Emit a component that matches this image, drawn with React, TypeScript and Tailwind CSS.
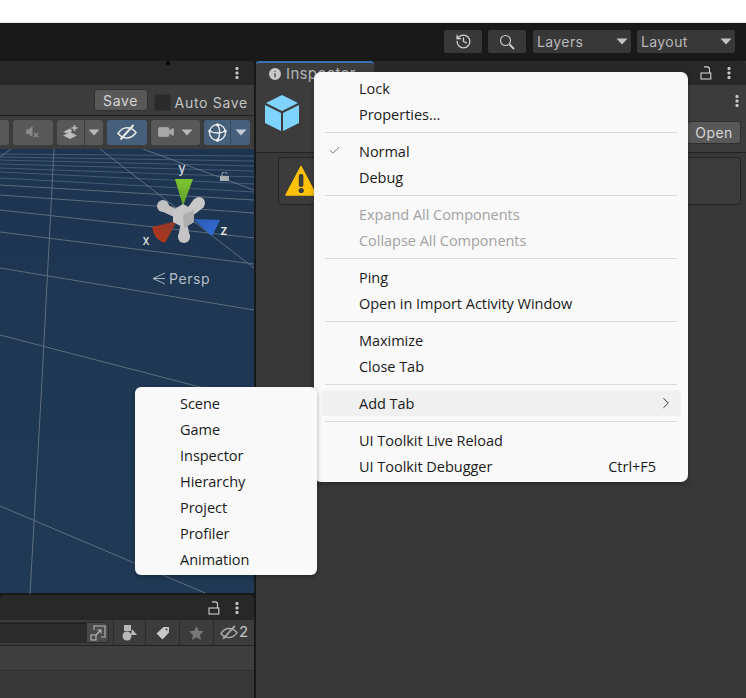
import React from "react";
import { History, Video, Check, ChevronRight, Info } from "lucide-react";

const Kebab = ({ className = "" }: { className?: string }) => (
  <svg width="4" height="14" viewBox="0 0 4 14" className={className}>
    <rect x="0.5" y="1" width="3" height="3" rx="1" fill="#c8c8c8" />
    <rect x="0.5" y="5.5" width="3" height="3" rx="1" fill="#c8c8c8" />
    <rect x="0.5" y="10" width="3" height="3" rx="1" fill="#c8c8c8" />
  </svg>
);

const OpenLock = () => (
  <svg width="12" height="14" viewBox="0 0 12 14" fill="none" stroke="#d0d0d0" strokeWidth="1.1">
    <path d="M9.5 7V3.2A2.3 2.3 0 0 0 7.2 .9H4" />
    <rect x="1" y="7" width="9.8" height="6" />
  </svg>
);

const EyeSlash = ({ color, w = 20 }: { color: string; w?: number }) => (
  <svg width={w} height={w * 0.85} viewBox="0 0 20 17" fill="none" stroke={color} strokeWidth="1.6">
    <path d="M1 9.5C4 5 7 3.8 10 3.8S16 5 19 8.5C16 12.5 13 14 10 14S4 13 1 9.5z" />
    <path d="M3.5 15.5L16.5 1" strokeWidth="2" />
  </svg>
);

const Caret = ({ color = "#c4c4c4" }: { color?: string }) => (
  <svg width="12" height="7" viewBox="0 0 12 7"><path d="M0.5 0.5h11L6 6.5z" fill={color} /></svg>
);

const Sep = () => <div className="h-px mx-[11px] my-[5px] bg-[#d9d9d9]" />;

const Row = ({ children, check, right, arrow, disabled, active, pl = "pl-[45px]" }: { children: React.ReactNode; check?: boolean; right?: string; arrow?: boolean; disabled?: boolean; active?: boolean; pl?: string }) => (
  <div className={`relative h-[26px] pt-[2px] flex items-center justify-between rounded-[4px] mr-[8px] ${pl} ${active ? "bg-[#f0f0f0]" : ""} ${disabled ? "text-[#a2a2a2]" : "text-[#1a1a1a]"}`}>
    {check && <Check size={13} strokeWidth={1.3} className="absolute left-[14px] top-[6px] text-[#444]" />}
    <span>{children}</span>
    {right && <span className="pr-[24px]">{right}</span>}
    {arrow && <ChevronRight size={18} strokeWidth={1.3} className="mr-[6px] -mt-[2px] text-[#333]" />}
  </div>
);

const SceneLines = () => (
  <svg className="absolute inset-0" width="254" height="445" viewBox="0 149 254 445" fill="none" strokeWidth="1">
    <g stroke="#566c84" opacity="0.7">
      <path d="M0 154L254 156M0 157L254 161M0 160L254 166M0 164L254 171M0 168L254 177" />
      <path d="M0 172L254 184M0 178L254 192" />
    </g>
    <g stroke="#78838f" opacity="0.72">
      <path d="M0 185L254 200M0 195L254 213M0 210L254 238M0 232L254 264" />
      <path d="M0 268L254 310M0 335L254 401M0 506L205 593" />
      <path d="M54 149L42 380L30 594" />
      <path d="M100 149L254 268M143 149L254 190M0 157L11 149" />
    </g>
  </svg>
);

const Gizmo = () => (
  <svg className="absolute left-[140px] top-[10px]" width="100" height="96" viewBox="0 0 100 96">
    <defs>
      <linearGradient id="gy" x1="0" y1="0" x2="0" y2="1"><stop offset="0" stopColor="#7cc62e" /><stop offset="1" stopColor="#5f9a2c" /></linearGradient>
      <linearGradient id="gx" x1="1" y1="0" x2="0" y2="1"><stop offset="0" stopColor="#8a3a2c" /><stop offset="1" stopColor="#b8361c" /></linearGradient>
      <linearGradient id="gz" x1="0" y1="0" x2="1" y2="1"><stop offset="0" stopColor="#2b5ab0" /><stop offset="1" stopColor="#3570dc" /></linearGradient>
    </defs>
    <text x="42" y="14" fontFamily="Inter, sans-serif" fontSize="13" fill="#e8e8e8" textAnchor="middle">y</text>
    <text x="6" y="86" fontFamily="Inter, sans-serif" fontSize="13" fill="#e8e8e8" textAnchor="middle">x</text>
    <text x="84" y="76" fontFamily="Inter, sans-serif" fontSize="13" fontWeight="500" fill="#e8e8e8" textAnchor="middle">z</text>
    <path d="M35 20H53L43 47z" fill="url(#gy)" />
    <circle cx="23" cy="47" r="6" fill="#c0c0c0" />
    <path d="M20 42L38 51L34 58L21 52z" fill="#c0c0c0" />
    <circle cx="59" cy="44" r="6" fill="#c8c8c8" />
    <path d="M54 40L64 48L51 58L46 51z" fill="#c8c8c8" />
    <circle cx="44" cy="78" r="6" fill="#c4c4c4" />
    <path d="M41 64L47 64L50 78H38z" fill="#c4c4c4" />
    <path d="M37 62L12 68Q14 81 25 84z" fill="url(#gx)" />
    <path d="M53 60L80 61L72 77z" fill="url(#gz)" />
    <path d="M43 45L54 51V63L44 69L33 63V51z" fill="#c6c6c6" />
    <path d="M43 56L54 51V63L44 69z" fill="#aeaeae" />
  </svg>
);

const BarBtn = ({ className, children }: { className: string; children?: React.ReactNode }) => (
  <div className={`h-[25px] rounded-[3px] flex items-center ${className}`}>{children}</div>
);

const WarnIcon = () => (
  <svg width="32" height="32" viewBox="0 0 32 32">
    <path d="M16 1.5L31 30H1z" fill="#ffc107" strokeLinejoin="round" stroke="#ffc107" strokeWidth="1.5" />
    <rect x="13.8" y="9" width="4.6" height="13" rx="2" fill="#3c3c3c" />
    <circle cx="16.2" cy="25.5" r="2.6" fill="#3c3c3c" />
  </svg>
);

export default function App() {
  return (
    <div className="relative w-[746px] h-[698px] overflow-hidden bg-white font-['Inter',sans-serif] flex flex-col">
      <div className="h-[22px] bg-white" />
      <div className="h-px bg-[#e6e6e6]" />
      {/* main toolbar */}
      <div className="h-[38px] bg-[#191919] flex items-center justify-end gap-[6px] pr-[11px] pb-[1px] text-[#b8b8b8] text-[14px]">
        <div className="w-[38px] h-[23px] bg-[#383838] rounded-[2px] flex items-center justify-center"><History size={17} strokeWidth={1.8} className="text-[#d0d0d0]" /></div>
        <div className="w-[38px] h-[23px] bg-[#383838] rounded-[2px] flex items-center justify-center mr-[1px]">
          <svg width="16" height="16" viewBox="0 0 16 16" fill="none" stroke="#d0d0d0"><circle cx="6.5" cy="6.5" r="5" strokeWidth="1.1" /><path d="M10.5 10.5L15 15" strokeWidth="1.8" /></svg>
        </div>
        <div className="w-[98px] h-[23px] bg-[#383838] rounded-[2px] flex items-center justify-between px-[4px] pr-[3px]"><span className="tracking-[0.4px]">Layers</span><Caret /></div>
        <div className="w-[98px] h-[23px] bg-[#383838] rounded-[2px] flex items-center justify-between px-[4px] pr-[3px]"><span className="tracking-[0.4px]">Layout</span><Caret /></div>
      </div>
      <div className="flex-1 flex bg-[#191919] gap-[2px] min-h-0">
        {/* left column */}
        <div className="w-[254px] flex flex-col relative">
          <div className="h-[24px] bg-[#282828] rounded-tr-[4px] flex items-center justify-end pr-[15px]"><Kebab /></div>
          <div className="h-[31px] bg-[#3c3c3c] border-b border-[#232323] flex items-center justify-end gap-[6px] pr-[6px] text-[14px] tracking-[0.7px] text-[#c4c4c4]">
            <div className="w-[54px] h-[22px] bg-[#585858] border border-[#303030] rounded-[3px] flex items-center justify-center text-[#d6d6d6]">Save</div>
            <div className="flex items-center gap-[4px] mt-[4px]">
              <div className="w-[17px] h-[17px] bg-[#2a2a2a] border border-[#333] rounded-[2px]" />
              <span>Auto Save</span>
            </div>
          </div>
          <div className="h-[33px] bg-[#3c3c3c] flex items-center gap-[4px] pb-[1px]">
            <BarBtn className="w-[9px] rounded-l-none bg-[#585858]" />
            <BarBtn className="w-[40px] justify-center bg-[#585858]">
              <svg width="14" height="13" viewBox="0 0 14 13"><path d="M0 3.5h2.5L6.5 0v11L2.5 8H0z" fill="#8a8a8a" /><path d="M8 7l4 4M12 7l-4 4" stroke="#8a8a8a" strokeWidth="1.5" /></svg>
            </BarBtn>
            <BarBtn className="w-[46px] bg-[#585858]">
              <div className="w-[28px] h-full flex items-center justify-center border-r border-[#3c3c3c]">
                <svg width="16" height="15" viewBox="0 0 16 15"><path d="M0 7L7 3.5L9 5.5L7 9zM0 10.5L7 7l7 3.5L7 14z" fill="#bcbcbc" /><path d="M11.5 0v6M8.5 3h6" stroke="#bcbcbc" strokeWidth="1.6" /></svg>
              </div>
              <div className="flex-1 flex justify-center"><Caret color="#b8b8b8" /></div>
            </BarBtn>
            <BarBtn className="w-[40px] justify-center bg-[#46607c]"><EyeSlash color="#e8e8e8" /></BarBtn>
            <BarBtn className="w-[49px] justify-between pl-[6px] pr-[7px] bg-[#585858]">
              <Video size={18} fill="#a8a8a8" strokeWidth={1} className="text-[#a8a8a8]" />
              <Caret color="#b8b8b8" />
            </BarBtn>
            <BarBtn className="w-[46px] bg-[#46607c]">
              <div className="w-[27px] h-full flex items-center justify-center border-r border-[#34485e]">
                <svg width="19" height="19" viewBox="0 0 19 19" fill="none" stroke="#eee" strokeWidth="1.3">
                  <circle cx="9.5" cy="9.5" r="8" />
                  <path d="M1.5 8Q9 12 17.5 8M9.5 1.5Q14 9 9.5 17.5" />
                  <g fill="#eee" stroke="none"><circle cx="9.5" cy="1.8" r="1.6" /><circle cx="1.8" cy="8" r="1.6" /><circle cx="17.2" cy="8" r="1.6" /><circle cx="9.5" cy="17.2" r="1.6" /></g>
                </svg>
              </div>
              <div className="flex-1 flex justify-center"><Caret color="#c2ccd6" /></div>
            </BarBtn>
          </div>
          {/* scene */}
          <div className="relative flex-1 min-h-0 bg-gradient-to-b from-[#1d3550] to-[#203a56] text-[#b5bec8]">
            <SceneLines />
            <Gizmo />
            <svg className="absolute left-[220px] top-[23px]" width="9" height="9" viewBox="0 0 9 9"><rect y="4" width="9" height="5" fill="#a8aeb4" /><path d="M2 4V2a2.5 2 0 0 1 5 0" fill="none" stroke="#a8aeb4" /></svg>
            <div className="absolute left-[152px] top-[119px] flex items-center gap-[3px] text-[14px]">
              <svg width="14" height="13" viewBox="0 0 14 13" fill="none" stroke="#aab4be" strokeWidth="1"><path d="M13 1L1 6.5L13 12M1 6.5h12" /></svg>
              <span className="tracking-[0.6px]">Persp</span>
            </div>
          </div>
          {/* bottom panel */}
          <div className="h-px bg-[#191919]" />
          <div className="h-[25px] mt-[1px] bg-[#282828] rounded-t-[4px] flex items-center justify-end gap-[15px] pr-[15px]"><OpenLock /><Kebab /></div>
          <div className="h-[26px] bg-[#3c3c3c] border-b border-[#232323] flex items-center text-[#c4c4c4]">
            <div className="w-[109px] h-[21px] flex items-center rounded-r-[5px] border border-[#2a2a2a] border-l-0 bg-[#4a4a4a]">
              <div className="w-[87px] h-full bg-[#2c2c2c] border-t border-[#202020]" />
              <div className="flex-1 flex justify-center">
                <svg width="16" height="16" viewBox="0 0 16 16" fill="none" stroke="#b8b8b8" strokeWidth="1.1"><path d="M4 5V1h11v11h-4" /><rect x="1" y="10" width="5" height="5" /><path d="M6 10l5-5M7.5 5H11v3.5" /></svg>
              </div>
            </div>
            <div className="ml-[4px] w-[32px] h-full flex items-center justify-center border-l border-[#2b2b2b]">
              <svg width="16" height="16" viewBox="0 0 16 16" fill="#b8b8b8"><rect x="2" y="0" width="7" height="6" /><circle cx="5" cy="11" r="4.5" /><path d="M10 4l5 6H9z" /></svg>
            </div>
            <div className="w-[34px] h-full flex items-center justify-center border-l border-[#2b2b2b]">
              <svg width="14" height="14" viewBox="0 0 14 14"><path d="M7.5 1H13v5.5L6.5 13.5 0.5 7.5z" fill="#c8c8c8" /><circle cx="10.5" cy="3.5" r="1" fill="#3c3c3c" /></svg>
            </div>
            <div className="w-[34px] h-full flex items-center justify-center border-l border-[#2b2b2b]">
              <svg width="15" height="14" viewBox="0 0 15 14"><path d="M7.5 0l2.2 4.7 5.1.6-3.8 3.5 1 5.1-4.5-2.6L3 14l1-5.1L.2 5.3l5.1-.6z" fill="#787878" /></svg>
            </div>
            <div className="flex-1 h-full flex items-center justify-center gap-[1px] border-l border-[#2b2b2b] text-[15px]">
              <EyeSlash color="#a8a8a8" w={18} /><span>2</span>
            </div>
          </div>
          <div className="h-[25px] bg-[#3e3e3e] border-b border-[#2e2e2e]" />
          <div className="h-[27px] bg-[#383838]" />
        </div>
        {/* right column */}
        <div className="flex-1 flex flex-col bg-[#383838]">
          <div className="h-[24px] bg-[#282828] flex items-start relative rounded-t-[4px]">
            <div className="w-[118px] h-[24px] bg-[#3c3c3c] border-t-2 border-[#3a72b0] rounded-t-[4px] flex items-center gap-[3px] pl-[11px] text-[15px] tracking-[0.35px] text-[#b4b4b4]">
              <Info size={16} fill="#c8c8c8" strokeWidth={2} className="text-[#3c3c3c]" />
              <span>Inspector</span>
            </div>
            <div className="ml-auto flex items-center gap-[15px] pr-[15px] h-full"><OpenLock /><Kebab /></div>
          </div>
          <div className="h-[68px] bg-[#3c3c3c] border-b border-[#232323] relative flex items-center justify-end pl-[9px] pr-[5px]">
            <svg className="absolute left-[8px] top-[9px]" width="36" height="38" viewBox="0 0 36 38">
              <path d="M18 1L34 9L18 17L2 9z" fill="#7fd4ff" />
              <path d="M1 11L17 19V37L1 29z" fill="#7fd4ff" />
              <path d="M35 11V29L19 37V19z" fill="#7fd4ff" />
            </svg>
            <Kebab className="absolute right-[7px] top-[9px]" />
            <div className="w-[54px] h-[23px] mt-[27px] bg-[#585858] rounded-[3px] border border-[#303030] flex items-center justify-center text-[14px] tracking-[0.4px] text-[#d6d6d6]">Open</div>
          </div>
          <div className="px-[5px] pt-[4px] pl-[22px]">
            <div className="h-[48px] bg-[#3c3c3c] border border-[#232323] rounded-[4px] flex items-center pl-[6px]"><WarnIcon /></div>
          </div>
        </div>
      </div>

      <div className="absolute left-[168px] top-[63px] w-[4px] h-[4px] -translate-x-1/2 -translate-y-1/2 rounded-full bg-black" />

      {/* main context menu */}
      <div className="absolute left-[314px] top-[72px] w-[374px] h-[410px] py-[3px] bg-[#f9f9f9] rounded-[7px] shadow-[0_2px_5px_rgba(0,0,0,0.3)] font-['Open_Sans',sans-serif] text-[14.5px] leading-none tracking-[-0.03px]">
        <Row>Lock</Row>
        <Row>Properties...</Row>
        <Sep />
        <Row check>Normal</Row>
        <Row>Debug</Row>
        <Sep />
        <Row disabled>Expand All Components</Row>
        <Row disabled>Collapse All Components</Row>
        <Sep />
        <Row>Ping</Row>
        <Row>Open in Import Activity Window</Row>
        <Sep />
        <Row>Maximize</Row>
        <Row>Close Tab</Row>
        <Sep />
        <div className="pl-[8px] -mr-px"><Row active pl="pl-[37px]" arrow>Add Tab</Row></div>
        <Sep />
        <Row>UI Toolkit Live Reload</Row>
        <Row right="Ctrl+F5">UI Toolkit Debugger</Row>
      </div>

      {/* sub menu */}
      <div className="absolute left-[135px] top-[387px] w-[182px] h-[188px] py-[3px] bg-[#f9f9f9] rounded-[6px] shadow-[0_2px_5px_rgba(0,0,0,0.3)] font-['Open_Sans',sans-serif] text-[14.5px] leading-none tracking-[-0.03px]">
        {["Scene", "Game", "Inspector", "Hierarchy", "Project", "Profiler", "Animation"].map((t) => (
          <Row key={t}>{t}</Row>
        ))}
      </div>
    </div>
  );
}
